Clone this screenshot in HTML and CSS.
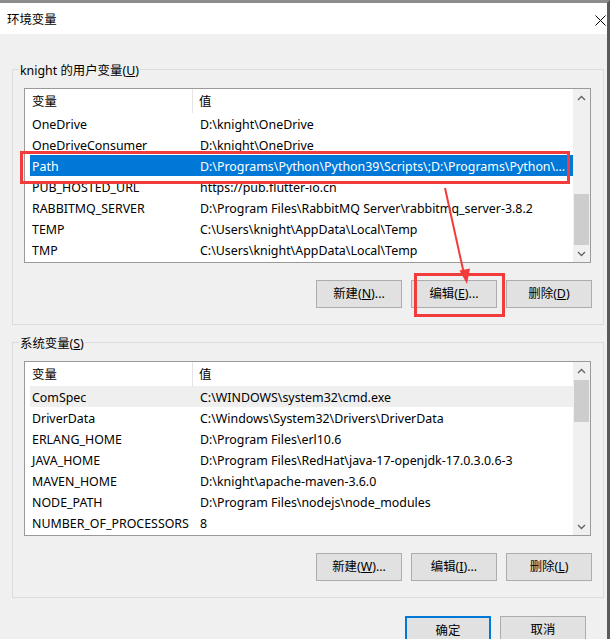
FILE: index.html
```html
<!DOCTYPE html>
<html lang="zh-CN">
<head>
<meta charset="utf-8">
<title>环境变量</title>
<link rel="stylesheet" href="styles.css">
</head>
<body>
<div class="window">
  <div class="titlebar">
    <span class="title">环境变量</span>
    <svg class="close" width="11" height="11" viewBox="0 0 11 11"><path d="M0.5 0.5 L10.5 10.5 M10.5 0.5 L0.5 10.5" stroke="#000" stroke-width="1" fill="none"/></svg>
  </div>
  <div class="content">
    <section class="group">
      <div class="group-label">knight 的用户变量(<u>U</u>)</div>
      <div class="list">
        <div class="list-body">
          <div class="header"><div class="hcell h1">变量</div><div class="hcell h2">值</div></div>
          <div class="row"><span class="c1">OneDrive</span><span class="c2">D:\knight\OneDrive</span></div>
          <div class="row"><span class="c1">OneDriveConsumer</span><span class="c2">D:\knight\OneDrive</span></div>
          <div class="row selected"><span class="c1">Path</span><span class="c2">D:\Programs\Python\Python39\Scripts\;D:\Programs\Python\...</span></div>
          <div class="row"><span class="c1">PUB_HOSTED_URL</span><span class="c2">https://pub.flutter-io.cn</span></div>
          <div class="row"><span class="c1">RABBITMQ_SERVER</span><span class="c2">D:\Program Files\RabbitMQ Server\rabbitmq_server-3.8.2</span></div>
          <div class="row"><span class="c1">TEMP</span><span class="c2">C:\Users\knight\AppData\Local\Temp</span></div>
          <div class="row"><span class="c1">TMP</span><span class="c2">C:\Users\knight\AppData\Local\Temp</span></div>
        </div>
        <div class="scrollbar">
          <div class="sb-btn"><svg width="9" height="6" viewBox="0 0 9 6"><path d="M1 5 L4.5 1.5 L8 5" stroke="#606060" stroke-width="1.3" fill="none"/></svg></div>
          <div class="track track-end"><div class="thumb thumb-user"></div></div>
          <div class="sb-btn"><svg width="9" height="6" viewBox="0 0 9 6"><path d="M1 1 L4.5 4.5 L8 1" stroke="#606060" stroke-width="1.3" fill="none"/></svg></div>
        </div>
      </div>
      <div class="buttons">
        <button class="btn">新建(<u>N</u>)...</button>
        <button class="btn">编辑(<u>E</u>)...</button>
        <button class="btn">删除(<u>D</u>)</button>
      </div>
    </section>

    <section class="group group-sys">
      <div class="group-label">系统变量(<u>S</u>)</div>
      <div class="list">
        <div class="list-body">
          <div class="header"><div class="hcell h1">变量</div><div class="hcell h2">值</div></div>
          <div class="row hot"><span class="c1">ComSpec</span><span class="c2">C:\WINDOWS\system32\cmd.exe</span></div>
          <div class="row"><span class="c1">DriverData</span><span class="c2">C:\Windows\System32\Drivers\DriverData</span></div>
          <div class="row"><span class="c1">ERLANG_HOME</span><span class="c2">D:\Program Files\erl10.6</span></div>
          <div class="row"><span class="c1">JAVA_HOME</span><span class="c2">D:\Program Files\RedHat\java-17-openjdk-17.0.3.0.6-3</span></div>
          <div class="row"><span class="c1">MAVEN_HOME</span><span class="c2">D:\knight\apache-maven-3.6.0</span></div>
          <div class="row"><span class="c1">NODE_PATH</span><span class="c2">D:\Program Files\nodejs\node_modules</span></div>
          <div class="row"><span class="c1">NUMBER_OF_PROCESSORS</span><span class="c2">8</span></div>
        </div>
        <div class="scrollbar">
          <div class="sb-btn"><svg width="9" height="6" viewBox="0 0 9 6"><path d="M1 5 L4.5 1.5 L8 5" stroke="#606060" stroke-width="1.3" fill="none"/></svg></div>
          <div class="track"><div class="thumb thumb-sys"></div></div>
          <div class="sb-btn"><svg width="9" height="6" viewBox="0 0 9 6"><path d="M1 1 L4.5 4.5 L8 1" stroke="#606060" stroke-width="1.3" fill="none"/></svg></div>
        </div>
      </div>
      <div class="buttons">
        <button class="btn">新建(<u>W</u>)...</button>
        <button class="btn">编辑(<u>I</u>)...</button>
        <button class="btn">删除(<u>L</u>)</button>
      </div>
    </section>

    <div class="dialog-buttons">
      <button class="btn btn-default">确定</button>
      <button class="btn">取消</button>
    </div>
  </div>

  <svg class="annot" width="610" height="639" viewBox="0 0 610 639">
    <rect x="21.5" y="152.5" width="547" height="30" fill="none" stroke="#f23b3b" stroke-width="3"/>
    <rect x="415.5" y="274.5" width="88" height="41" fill="none" stroke="#f23b3b" stroke-width="3"/>
    <line x1="445" y1="188" x2="464" y2="274" stroke="#f23b3b" stroke-width="2"/>
    <polygon points="467,284 459.5,270.5 470,268.5" fill="#f23b3b"/>
  </svg>
</div>
</body>
</html>
```

FILE: styles.css
```css
* { box-sizing: border-box; }

html, body {
  margin: 0;
  padding: 0;
  width: 610px;
  height: 639px;
  overflow: hidden;
  background: #f0f0f0;
  font-family: "Noto Sans", "Noto Sans CJK SC", sans-serif;
  font-size: 12.4px;
  color: #000;
}

.window {
  position: relative;
  width: 610px;
  height: 639px;
  background: #f0f0f0;
  border-top: 3px solid #8c8c8c;
  border-right: 3px solid #5a5a5a;
  overflow: hidden;
}

.titlebar {
  height: 31px;
  background: #fff;
  display: flex;
  align-items: center;
  justify-content: space-between;
  padding: 3px 1px 0 7px;
}

.title {
  line-height: 16px;
}

.close {
  display: block;
}

.content {
  padding: 35px 0 0 12px;
}

.group {
  position: relative;
  width: 592px;
  height: 256px;
  border: 1px solid #dcdcdc;
  padding: 18px 11px 16px 11px;
}

.group-sys {
  margin-top: 17px;
}

.group-label {
  position: absolute;
  top: -8px;
  left: 6px;
  padding: 0 1px;
  line-height: 18px;
  background: #f0f0f0;
}

u { text-decoration: underline; text-underline-offset: 1px; }

.list {
  width: 567px;
  height: 175px;
  border: 1px solid #9a9a9a;
  background: #fff;
  display: flex;
}

.list-body {
  flex: 1;
  padding-left: 5px;
  overflow: hidden;
}

.header {
  display: flex;
  height: 24px;
}

.hcell {
  padding-top: 2px;
  line-height: 21px;
  white-space: nowrap;
}

.h1 {
  width: 163px;
  padding-left: 2px;
  border-right: 1px solid #e5e5e5;
}

.h2 {
  padding-left: 6px;
}

.row {
  display: flex;
  height: 21px;
  padding-top: 2px;
  line-height: 19px;
  white-space: nowrap;
}

.row .c1 {
  width: 170px;
  flex: none;
  padding-left: 2px;
}

.row .c2 {
  flex: 1;
  overflow: hidden;
}

.row.selected {
  background: #0078d7;
  color: #fff;
}

.row.hot {
  background: #efefef;
}

.scrollbar {
  width: 17px;
  flex: none;
  background: #f0f0f0;
  display: flex;
  flex-direction: column;
}

.sb-btn {
  height: 17px;
  display: flex;
  align-items: center;
  justify-content: center;
}

.track {
  flex: 1;
  display: flex;
  flex-direction: column;
  justify-content: flex-start;
  padding: 1px 1px 0 1px;
}

.track-end {
  justify-content: flex-end;
  padding: 0 1px;
}

.thumb {
  background: #cdcdcd;
}

.thumb-user { height: 51px; }
.thumb-sys { height: 42px; }

.buttons {
  display: flex;
  justify-content: flex-end;
  gap: 9px;
  margin-top: 17px;
}

.btn {
  width: 86px;
  height: 28px;
  padding: 0;
  background: #e1e1e1;
  border: 1px solid #adadad;
  font-family: inherit;
  font-size: 12.4px;
  color: #000;
  line-height: 26px;
}

.dialog-buttons {
  width: 592px;
  display: flex;
  justify-content: flex-end;
  gap: 9px;
  padding-right: 18px;
  margin-top: 18px;
}

.btn-default {
  border: 2px solid #0078d7;
}

.annot {
  position: absolute;
  left: 0;
  top: -3px;
  pointer-events: none;
}
```
